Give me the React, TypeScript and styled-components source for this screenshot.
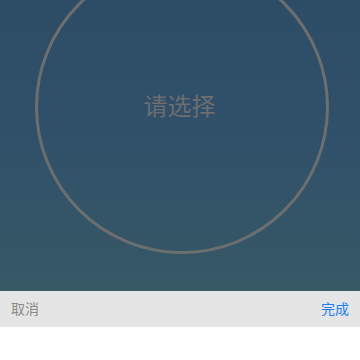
import React from "react";
import styled, { createGlobalStyle } from "styled-components";

const Global = createGlobalStyle`
  html, body { margin: 0; padding: 0; background: #ffffff; }
  body { font-family: "Noto Sans CJK SC", "Noto Sans", sans-serif; }
`;

const Page = styled.div`
  width: 360px;
  height: 360px;
  display: flex;
  flex-direction: column;
  overflow: hidden;
`;

const Stage = styled.div`
  height: 291px;
  flex: none;
  background: linear-gradient(180deg, #2d4c66 0%, #31516a 50%, #375865 100%);
  display: flex;
  justify-content: center;
  overflow: hidden;
`;

const Dial = styled.div`
  width: 288px;
  height: 288px;
  flex: none;
  margin-top: -40px;
  margin-left: 3px;
  border: 3px solid #6d6e6e;
  border-radius: 50%;
  display: flex;
  align-items: center;
  justify-content: center;
`;

const Prompt = styled.span`
  font-size: 24px;
  color: #6c6e70;
  margin-left: -4px;
  margin-top: -5px;
`;

const Toolbar = styled.div`
  height: 36px;
  flex: none;
  background: #e5e5e5;
  display: flex;
  align-items: center;
  justify-content: space-between;
  padding: 0 11px 2px;
  box-sizing: border-box;
`;

const Action = styled.span<{ $primary?: boolean }>`
  font-size: 14px;
  color: ${(p) => (p.$primary ? "#1a7ef2" : "#8a8a8a")};
`;

const Footer = styled.div`
  flex: 1;
  background: #ffffff;
`;

export default function App() {
  return (
    <>
      <Global />
      <Page>
        <Stage>
          <Dial>
            <Prompt>请选择</Prompt>
          </Dial>
        </Stage>
        <Toolbar>
          <Action>取消</Action>
          <Action $primary>完成</Action>
        </Toolbar>
        <Footer />
      </Page>
    </>
  );
}
